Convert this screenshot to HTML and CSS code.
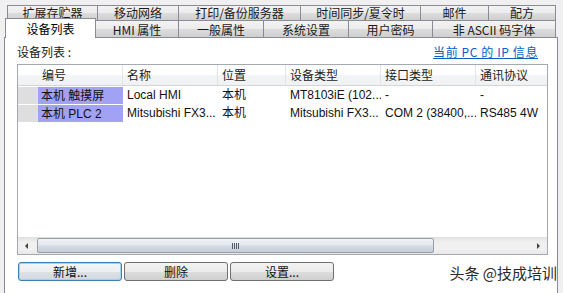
FILE: index.html
```html
<!DOCTYPE html>
<html lang="zh-CN">
<head>
    <meta charset="UTF-8">
    <title>系统参数设置 - 设备列表</title>
    <link rel="stylesheet" href="styles.css">
</head>
<body>
    <div class="window">
        <div class="tab-row back">
            <div class="tab w1">扩展存贮器</div>
            <div class="tab w2">移动网络</div>
            <div class="tab w3">打印/备份服务器</div>
            <div class="tab w4">时间同步/夏令时</div>
            <div class="tab w5">邮件</div>
            <div class="tab w6">配方</div>
        </div>
        <div class="tab-row front">
            <div class="tab selected">设备列表</div>
            <div class="tab f1">HMI 属性</div>
            <div class="tab f2">一般属性</div>
            <div class="tab f3">系统设置</div>
            <div class="tab f4">用户密码</div>
            <div class="tab f5">非 ASCII 码字体</div>
        </div>

        <div class="panel">
            <div class="panel-head">
                <span class="label">设备列表 :</span>
                <a class="link" href="#">当前 PC 的 IP 信息</a>
            </div>

            <div class="listview">
                <div class="lv-header">
                    <div class="col first">编号</div>
                    <div class="col c-name">名称</div>
                    <div class="col c-loc">位置</div>
                    <div class="col c-type">设备类型</div>
                    <div class="col c-port">接口类型</div>
                    <div class="col c-proto">通讯协议</div>
                </div>
                <div class="lv-row">
                    <div class="lead"></div>
                    <div class="cell c-idcell sel">本机 触摸屏</div>
                    <div class="cell c-name">Local HMI</div>
                    <div class="cell c-loc">本机</div>
                    <div class="cell c-type">MT8103iE (102...</div>
                    <div class="cell c-port">-</div>
                    <div class="cell c-proto">-</div>
                </div>
                <div class="lv-row">
                    <div class="lead"></div>
                    <div class="cell c-idcell sel">本机 PLC 2</div>
                    <div class="cell c-name">Mitsubishi FX3...</div>
                    <div class="cell c-loc">本机</div>
                    <div class="cell c-type">Mitsubishi FX3...</div>
                    <div class="cell c-port">COM 2 (38400,...</div>
                    <div class="cell c-proto">RS485 4W</div>
                </div>
                <div class="lv-fill"></div>
                <div class="hscroll">
                    <div class="arrow left"><span></span></div>
                    <div class="track">
                        <div class="thumb"><span class="grip"></span></div>
                    </div>
                    <div class="arrow right"><span></span></div>
                </div>
            </div>

            <div class="buttons">
                <button class="btn focus">新增...</button>
                <button class="btn">删除</button>
                <button class="btn">设置...</button>
            </div>
        </div>

        <div class="watermark">头条 @技成培训</div>
    </div>
</body>
</html>
```

FILE: styles.css
```css
body {
    margin: 0;
    height: 293px;
    overflow: hidden;
    background-color: #f0f0f0;
    font-family: "Noto Sans CJK SC", "Liberation Sans", sans-serif;
    font-size: 12px;
    color: #000;
}
.window {
    position: relative;
    padding: 5px 0 0 4px;
    width: 554px;
    height: 288px;
}
.tab-row {
    display: flex;
}
.tab {
    box-sizing: border-box;
    flex-shrink: 0;
    border: 1px solid #898c95;
    border-bottom: none;
    margin-right: -1px;
    background: linear-gradient(#f3f3f3, #ebebeb 50%, #dddddd 51%, #cfcfcf);
    text-align: center;
    white-space: nowrap;
    overflow: hidden;
    color: #1a1a1a;
}
.back {
    margin-left: 3px;
    height: 15px;
}
.back .tab {
    height: 15px;
    line-height: 14px;
}
.w1 { width: 91px; }
.w2 { width: 82px; }
.w3 { width: 123px; }
.w4 { width: 121px; }
.w5 { width: 69px; }
.w6 { width: 68px; }
.front {
    margin-left: 1px;
    height: 17px;
}
.front .tab {
    height: 17px;
    line-height: 17px;
}
.f1 { width: 84px; }
.f2 { width: 86px; }
.f3 { width: 86px; }
.f4 { width: 85px; }
.f5 { width: 124px; }
.front .tab.selected {
    position: relative;
    z-index: 2;
    width: 91px;
    height: 20px;
    margin-top: -2px;
    line-height: 19px;
    background: #fff;
    color: #000;
}
.panel {
    box-sizing: border-box;
    width: 554px;
    height: 270px;
    border: 1px solid #898c95;
    background-color: #fff;
    padding: 0 9px 0 12px;
}
.panel-head {
    display: flex;
    align-items: center;
    justify-content: space-between;
    height: 26px;
}
.label {
    color: #222;
}
.link {
    margin-right: 10px;
    color: #0b5fc4;
    text-decoration: underline;
    letter-spacing: 0.6px;
}
.listview {
    box-sizing: border-box;
    display: flex;
    flex-direction: column;
    width: 531px;
    height: 191px;
    border: 1px solid #a5a9b0;
    background-color: #fff;
    overflow: hidden;
}
.lv-header {
    display: flex;
    height: 21px;
    flex-shrink: 0;
    background: linear-gradient(#ffffff, #ffffff 50%, #f4f5f7 51%, #f0f1f3);
    border-bottom: 1px solid #d5d5d5;
    box-sizing: border-box;
}
.col {
    box-sizing: border-box;
    flex-shrink: 0;
    height: 20px;
    line-height: 20px;
    padding-left: 4px;
    border-right: 1px solid #e3e4e6;
    white-space: nowrap;
    overflow: hidden;
    color: #222;
}
.col.first {
    width: 105px;
    padding-left: 24px;
}
.c-name { width: 95px; }
.c-loc { width: 68px; }
.c-type { width: 95px; }
.c-port { width: 95px; }
.c-proto { width: 80px; border-right: none; }
.lv-row {
    display: flex;
    height: 18px;
    flex-shrink: 0;
}
.lead {
    box-sizing: border-box;
    flex-shrink: 0;
    width: 20px;
    border-top: 1px solid #fff;
    background-color: #dedede;
}
.cell {
    box-sizing: border-box;
    flex-shrink: 0;
    height: 18px;
    line-height: 17px;
    padding: 1px 0 0 4px;
    white-space: nowrap;
    overflow: hidden;
    font-family: "Liberation Sans", "Noto Sans CJK SC", sans-serif;
    color: #111;
}
.c-idcell {
    width: 85px;
    padding-left: 3px;
}
.sel {
    border-top: 1px solid #fff;
    background-color: #a2a2f4;
}
.lv-fill {
    flex: 1;
}
.hscroll {
    display: flex;
    height: 17px;
    flex-shrink: 0;
    background: linear-gradient(#e4e4e4, #f0f0f0 30%, #f0f0f0 70%, #e8e8e8);
    border-top: 1px solid #e0e0e0;
    box-sizing: border-box;
}
.arrow {
    width: 17px;
    display: flex;
    align-items: center;
    justify-content: center;
}
.arrow span {
    width: 0;
    height: 0;
    border-top: 3px solid transparent;
    border-bottom: 3px solid transparent;
}
.arrow.left span {
    border-right: 3px solid #404040;
}
.arrow.right span {
    border-left: 3px solid #404040;
}
.track {
    flex: 1;
    padding: 0 0 0 2px;
}
.thumb {
    box-sizing: border-box;
    width: 397px;
    height: 15px;
    border: 1px solid #979ea8;
    border-radius: 2px;
    background: linear-gradient(#f1f3f6, #e4e8ee 45%, #d3dae3 55%, #c5ced9);
    display: flex;
    align-items: center;
    justify-content: center;
}
.grip {
    width: 7px;
    height: 6px;
    background: repeating-linear-gradient(90deg, #555d68 0 1px, transparent 1px 2px);
}
.buttons {
    display: flex;
    gap: 2px;
    margin: 7px 0 0 1px;
}
.btn {
    box-sizing: border-box;
    width: 104px;
    height: 19px;
    padding: 0;
    border: 1px solid #707070;
    border-radius: 3px;
    background: linear-gradient(#f2f2f2, #ebebeb 50%, #dddddd 51%, #cfcfcf);
    font-family: "Noto Sans CJK SC", sans-serif;
    font-size: 12px;
    line-height: 16px;
    color: #111;
}
.btn.focus {
    border-color: #3c7fb1;
    box-shadow: inset 0 0 0 1px #9fd4ef;
    background: linear-gradient(#f4f6f8, #ebeef1 50%, #dde2e7 51%, #d2d8de);
}
.watermark {
    position: absolute;
    right: 1px;
    top: 263px;
    font-size: 15px;
    line-height: 20px;
    color: #2a2a2a;
}
```
